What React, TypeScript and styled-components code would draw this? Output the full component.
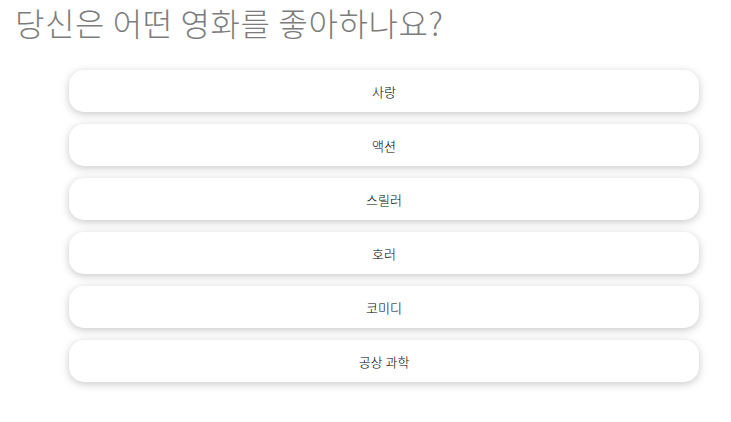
import React from "react";
import styled, { createGlobalStyle } from "styled-components";

const GlobalStyle = createGlobalStyle`
  html, body { margin: 0; padding: 0; background: #ffffff; }
  body { font-family: "Noto Sans CJK KR", "Noto Sans", sans-serif; }
`;

const Page = styled.div`
  padding: 0 0 40px 15px;
`;

const Title = styled.h1`
  margin: 0;
  font-size: 32px;
  line-height: 44px;
  letter-spacing: 0.6px;
  font-weight: 300;
  color: #7c7c7c;
  font-family: "Noto Sans CJK KR", "Noto Sans", sans-serif;
`;

const List = styled.div`
  display: flex;
  flex-direction: column;
  gap: 12px;
  width: 630px;
  margin: 26px 0 0 54px;
`;

const Option = styled.button`
  height: 42px;
  border: none;
  border-radius: 15px;
  background: #ffffff;
  box-shadow: 0 2px 8px rgba(0, 0, 0, 0.22);
  font-family: "Noto Sans CJK KR", "Noto Sans", sans-serif;
  font-size: 13px;
  font-weight: 300;
  color: #000000;
  cursor: pointer;
  padding: 0;
`;

const options = ["사랑", "액션", "스릴러", "호러", "코미디", "공상 과학"];

export default function App() {
  return (
    <>
      <GlobalStyle />
      <Page>
        <Title>당신은 어떤 영화를 좋아하나요?</Title>
        <List>
          {options.map((o) => (
            <Option key={o}>{o}</Option>
          ))}
        </List>
      </Page>
    </>
  );
}
